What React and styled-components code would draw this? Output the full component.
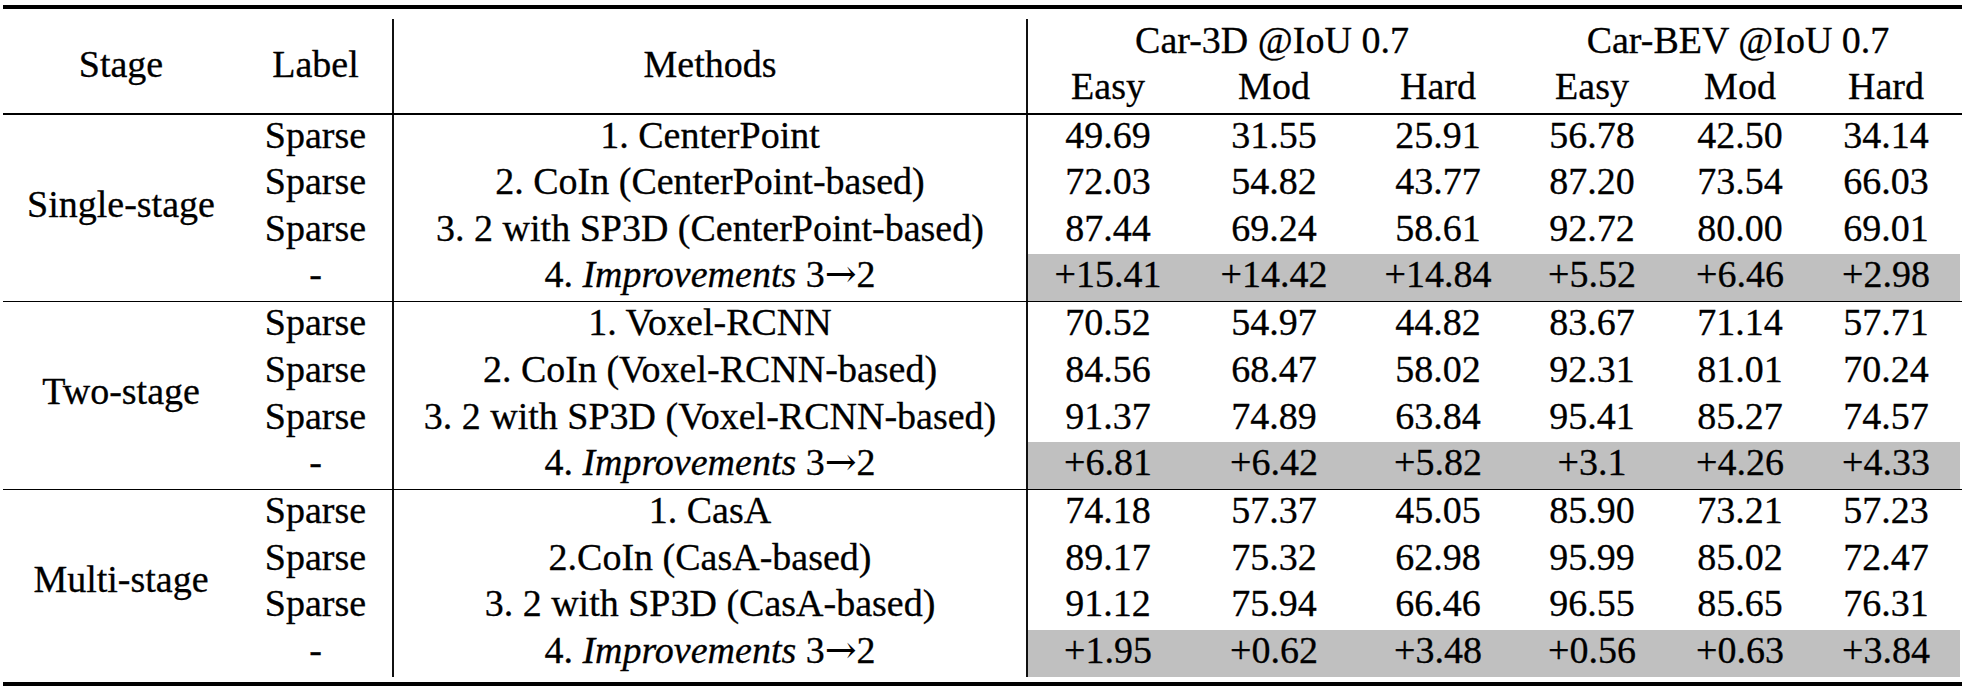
import React from "react";
import styled, { createGlobalStyle, css } from "styled-components";

const GlobalStyle = createGlobalStyle`
  html, body {
    margin: 0;
    padding: 0;
    background: #ffffff;
    color: #000000;
    font-family: "Liberation Serif", serif;
  }
`;

const serifText = css`
  font-family: "Liberation Serif", serif;
  font-size: 38px;
  color: #000000;
  -webkit-text-stroke: 0.3px #000000;
`;

const COLS = "236px 153px 634px 162px 172px 156px 152px 144px 148px";
const ROW_H = 46.6;

const Table = styled.div`
  width: 1957px;
  margin: 5px 0 0 3px;
  ${serifText}
`;

const Rule = styled.div`
  width: 1959px;
  background: #000000;
  height: ${(p) => p.$h}px;
  margin-top: ${(p) => p.$mt || 0}px;
  margin-bottom: ${(p) => p.$mb || 0}px;
`;

const HeaderGrid = styled.div`
  display: grid;
  grid-template-columns: ${COLS};
  grid-template-rows: 47px 47px;
`;

const divider = css`
  border-left: 2px solid #111111;
`;

const HeadCell = styled.div`
  ${serifText}
  box-sizing: border-box;
  text-align: center;
  white-space: nowrap;
  line-height: ${(p) => p.$lh || 42.3}px;
  ${(p) => p.$col && `grid-column: ${p.$col};`}
  ${(p) => p.$row && `grid-row: ${p.$row};`}
  ${(p) => p.$divider && divider}
  ${(p) =>
    p.$tall &&
    css`
      display: flex;
      align-items: center;
      justify-content: center;
      padding-bottom: 3px;
    `}
`;

const GroupGrid = styled.div`
  display: grid;
  grid-template-columns: ${COLS};
  grid-template-rows: repeat(4, ${ROW_H}px);
`;

const StageCell = styled.div`
  ${serifText}
  grid-column: 1;
  grid-row: 1 / span 4;
  display: flex;
  align-items: center;
  justify-content: center;
  padding-bottom: 8px;
  line-height: 42.3px;
  white-space: nowrap;
`;

const Cell = styled.div`
  ${serifText}
  box-sizing: border-box;
  text-align: center;
  white-space: nowrap;
  line-height: 41.5px;
  ${(p) => p.$divider && divider}
  ${(p) => p.$shade && `background: #c0c0c0;`}
`;

const Italic = styled.span`
  font-style: italic;
`;

const Arrow = styled.span`
  font-family: "DejaVu Serif", serif;
  font-size: 38px;
  line-height: 0;
  -webkit-text-stroke: 0;
`;

const groups = [
  {
    stage: "Single-stage",
    rows: [
      ["1. CenterPoint", ["49.69", "31.55", "25.91", "56.78", "42.50", "34.14"]],
      ["2. CoIn (CenterPoint-based)", ["72.03", "54.82", "43.77", "87.20", "73.54", "66.03"]],
      ["3. 2 with SP3D (CenterPoint-based)", ["87.44", "69.24", "58.61", "92.72", "80.00", "69.01"]],
      [null, ["+15.41", "+14.42", "+14.84", "+5.52", "+6.46", "+2.98"]],
    ],
  },
  {
    stage: "Two-stage",
    rows: [
      ["1. Voxel-RCNN", ["70.52", "54.97", "44.82", "83.67", "71.14", "57.71"]],
      ["2. CoIn (Voxel-RCNN-based)", ["84.56", "68.47", "58.02", "92.31", "81.01", "70.24"]],
      ["3. 2 with SP3D (Voxel-RCNN-based)", ["91.37", "74.89", "63.84", "95.41", "85.27", "74.57"]],
      [null, ["+6.81", "+6.42", "+5.82", "+3.1", "+4.26", "+4.33"]],
    ],
  },
  {
    stage: "Multi-stage",
    rows: [
      ["1. CasA", ["74.18", "57.37", "45.05", "85.90", "73.21", "57.23"]],
      ["2.CoIn (CasA-based)", ["89.17", "75.32", "62.98", "95.99", "85.02", "72.47"]],
      ["3. 2 with SP3D (CasA-based)", ["91.12", "75.94", "66.46", "96.55", "85.65", "76.31"]],
      [null, ["+1.95", "+0.62", "+3.48", "+0.56", "+0.63", "+3.84"]],
    ],
  },
];

function Improvement() {
  return (
    <>
      4. <Italic>Improvements</Italic> 3<Arrow>→</Arrow>2
    </>
  );
}

function Group({ group }) {
  return (
    <GroupGrid>
      <StageCell>{group.stage}</StageCell>
      {group.rows.map(([method, values], i) => {
        const isImp = method === null;
        return (
          <React.Fragment key={i}>
            <Cell>{isImp ? "-" : "Sparse"}</Cell>
            <Cell $divider>{isImp ? <Improvement /> : method}</Cell>
            {values.map((v, j) => (
              <Cell key={j} $divider={j === 0} $shade={isImp}>
                {v}
              </Cell>
            ))}
          </React.Fragment>
        );
      })}
    </GroupGrid>
  );
}

export default function App() {
  return (
    <>
      <GlobalStyle />
      <Table>
        <Rule $h={3.5} $mb={10.5} />
        <HeaderGrid>
          <HeadCell $col="1" $row="1 / span 2" $tall>Stage</HeadCell>
          <HeadCell $col="2" $row="1 / span 2" $tall>Label</HeadCell>
          <HeadCell $col="3" $row="1 / span 2" $tall $divider>Methods</HeadCell>
          <HeadCell $col="4 / span 3" $row="1" $divider>Car-3D @IoU 0.7</HeadCell>
          <HeadCell $col="7 / span 3" $row="1">Car-BEV @IoU 0.7</HeadCell>
          <HeadCell $col="4" $row="2" $divider $lh={40}>Easy</HeadCell>
          <HeadCell $col="5" $row="2" $lh={40}>Mod</HeadCell>
          <HeadCell $col="6" $row="2" $lh={40}>Hard</HeadCell>
          <HeadCell $col="7" $row="2" $lh={40}>Easy</HeadCell>
          <HeadCell $col="8" $row="2" $lh={40}>Mod</HeadCell>
          <HeadCell $col="9" $row="2" $lh={40}>Hard</HeadCell>
        </HeaderGrid>
        <Rule $h={1.5} />
        <Group group={groups[0]} />
        <Rule $h={1.5} />
        <Group group={groups[1]} />
        <Rule $h={1.5} />
        <Group group={groups[2]} />
        <Rule $h={4} $mt={5.5} />
      </Table>
    </>
  );
}
